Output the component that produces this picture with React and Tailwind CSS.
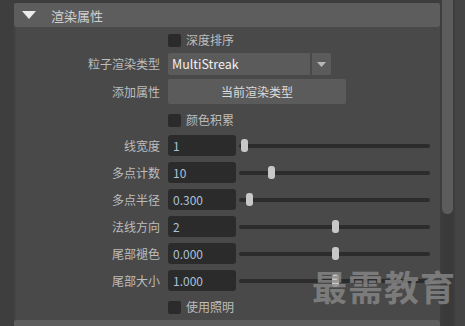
import React from 'react';

const font = { fontFamily: '"Noto Sans CJK SC", "Noto Sans", sans-serif' };

const sliders = [
    { label: '线宽度', value: '1', pos: 2 },
    { label: '多点计数', value: '10', pos: 29 },
    { label: '多点半径', value: '0.300', pos: 7 },
    { label: '法线方向', value: '2', pos: 93 },
    { label: '尾部褪色', value: '0.000', pos: 93 },
    { label: '尾部大小', value: '1.000', pos: 93 },
];

const CheckRow = ({ text, className }) => (
    <div className={`flex items-center h-[14px] ${className}`}>
        <div className="w-[152px] shrink-0" />
        <div className="w-[13px] h-[13px] bg-[#2b2b2b] rounded-[2px]" />
        <span className="ml-[5px] text-[12px] text-[#bdbdbd] leading-none">{text}</span>
    </div>
);

const Label = ({ children }) => (
    <div className="w-[144px] shrink-0 pr-0 text-right text-[12px] text-[#bdbdbd] leading-none">{children}</div>
);

const App = () => {
    return (
        <div className="relative w-[465px] h-[326px] overflow-hidden flex bg-[#444444]" style={font}>
            {/* left gutter */}
            <div className="w-[14px] shrink-0 bg-[#3e3e3e]" />

            {/* attribute panel */}
            <div className="w-[426px] shrink-0 flex flex-col bg-[#3d3d3d]">
                <div className="h-[3px] shrink-0" />
                <div className="h-[24px] shrink-0 bg-[#5d5d5d] rounded-[2px] flex items-center">
                    <svg width="14" height="8" viewBox="0 0 14 8" className="ml-[8px]">
                        <polygon points="0,0 14,0 7,8" fill="#ececec" />
                    </svg>
                    <span className="ml-[15px] text-[13px] text-[#cfcfcf] leading-none">渲染属性</span>
                </div>

                <div className="h-[293px] shrink-0 bg-[#494949] border-l-2 border-[#444444] flex flex-col">
                    <CheckRow text="深度排序" className="mt-[6px]" />

                    <div className="flex items-center h-[22px] mt-[6px]">
                        <Label>粒子渲染类型</Label>
                        <div className="ml-[8px] w-[142px] h-full bg-[#5b5b5b] rounded-l-[2px] flex items-center pl-[4px] text-[12.5px] text-[#f0f0f0]">
                            MultiStreak
                        </div>
                        <div className="ml-[2px] w-[19px] h-full bg-[#5b5b5b] rounded-r-[2px] flex items-center justify-center">
                            <svg width="9" height="5" viewBox="0 0 9 5">
                                <polygon points="0,0 9,0 4.5,5" fill="#b8b8b8" />
                            </svg>
                        </div>
                    </div>

                    <div className="flex items-center h-[25px] mt-[4px]">
                        <Label>添加属性</Label>
                        <div className="ml-[8px] w-[178px] h-full bg-[#5b5b5b] rounded-[2px] flex items-center justify-center text-[12px] text-[#dcdcdc]">
                            当前渲染类型
                        </div>
                    </div>

                    <CheckRow text="颜色积累" className="mt-[9px]" />

                    <div className="flex flex-col gap-[6px] mt-[8px]">
                        {sliders.map((s) => (
                            <div key={s.label} className="flex items-center h-[21px]">
                                <Label>{s.label}</Label>
                                <div className="ml-[8px] w-[68px] h-full bg-[#2b2b2b] rounded-[3px] flex items-center pl-[5px] text-[12px] text-[#a9c1d9]">
                                    {s.value}
                                </div>
                                <div className="relative ml-[3px] w-[191px] h-full flex items-center">
                                    <div className="w-full h-[4px] bg-[#2c2c2c] rounded-full" />
                                    <div
                                        className="absolute top-[4px] w-[7px] h-[13px] bg-[#c8c8c8] rounded-[3px]"
                                        style={{ left: s.pos }}
                                    />
                                </div>
                            </div>
                        ))}
                    </div>

                    <CheckRow text="使用照明" className="mt-[9px]" />
                </div>

                <div className="h-[6px] shrink-0 bg-[#5d5d5d] rounded-t-[2px]" />
            </div>

            {/* scrollbar */}
            <div className="w-[2px] shrink-0 bg-[#3d3d3d]" />
            <div className="w-[11px] shrink-0 flex flex-col bg-[#3a3a3a]">
                <div className="h-[214px] bg-[#5c5c5c] rounded-b-full" />
            </div>
            <div className="w-[12px] shrink-0 bg-[#444444] border-l-2 border-[#3d3d3d]" />

            {/* watermark */}
            <div className="absolute left-[312px] top-[268px] text-[35px] font-bold text-[#8a8a8a]/80 leading-none tracking-[1px] pointer-events-none">
                最需教育
            </div>
        </div>
    );
};

export default App;
